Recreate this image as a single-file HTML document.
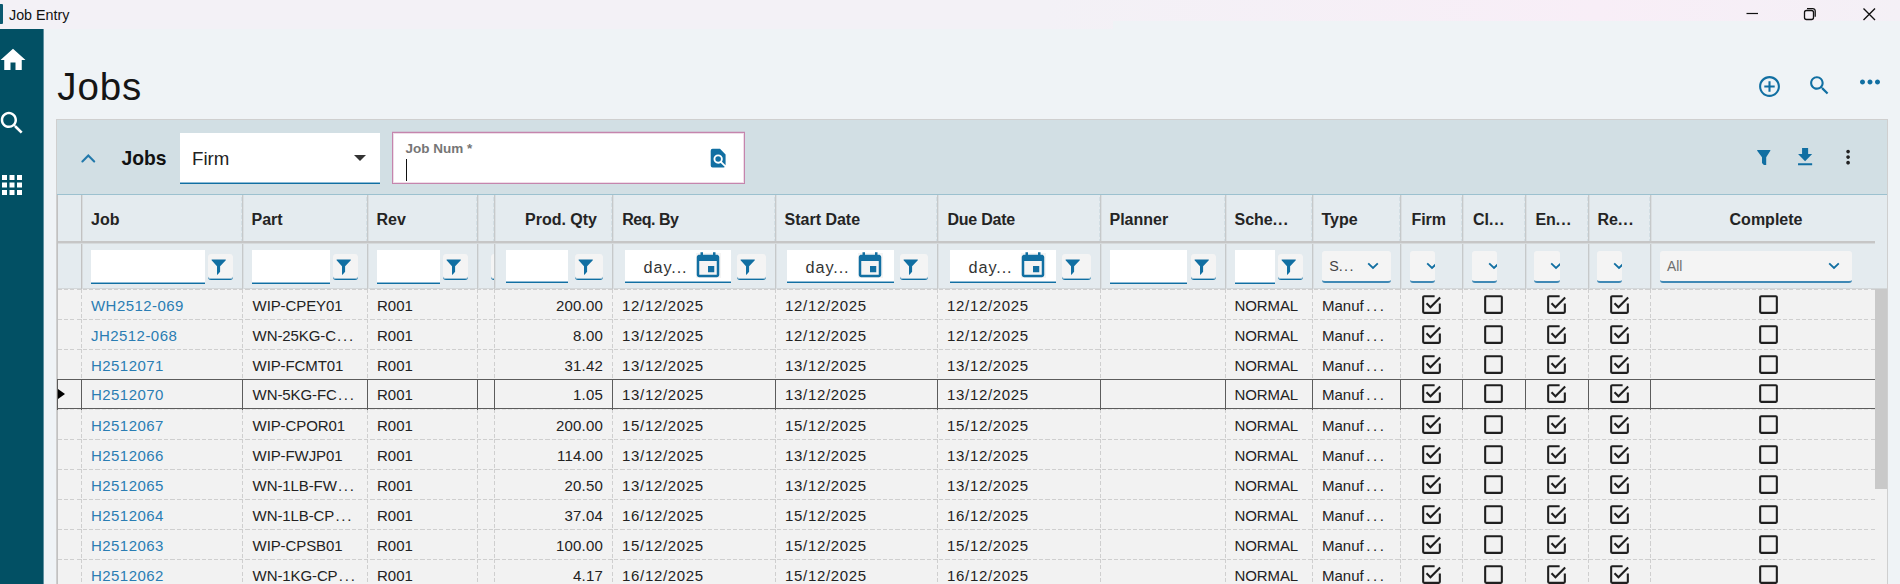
<!DOCTYPE html>
<html lang="en"><head><meta charset="utf-8"><title>Job Entry</title>
<style>
*{box-sizing:border-box;margin:0;padding:0}
html,body{width:1900px;height:584px;overflow:hidden}
body{position:relative;background:#eff3f6;font-family:"Liberation Sans",sans-serif;color:#222;font-size:15px}
.abs{position:absolute}
.tbar{position:absolute;left:0;top:0;width:1900px;height:29px;background:linear-gradient(to right,#f3f1f6 0%,#f3f1f6 55%,#f8eef7 84%,#f4f0f6 100%)}
.tbar2{position:absolute;left:1113px;top:21px;width:787px;height:8px;background:#eff3f6}
.appico{position:absolute;left:0;top:4px;width:2.500px;height:20px;background:#0b5a70;border-radius:0 1px 1px 0}
.ttl{position:absolute;left:9px;top:6.800px;font-size:14.3px;line-height:17px;color:#111;white-space:nowrap}
.side{position:absolute;left:0;top:29px;width:43px;height:555px;background:#025064;box-shadow:1px 0 0 #5f90a0}
.side svg{position:absolute}
h1{position:absolute;left:57.300px;top:64.800px;letter-spacing:.9px;font-size:38.5px;line-height:44px;font-weight:400;color:#151515;white-space:nowrap}
.panel{position:absolute;left:56px;top:119px;width:1832px;height:480px;background:#d2dfe4;border:1px solid #cfcfcf}
.ptitle{position:absolute;left:121.5px;top:147px;font-size:19.3px;line-height:24px;font-weight:700;color:#111}
.firm{position:absolute;left:180px;top:133px;width:200px;height:51px;background:linear-gradient(to bottom,#fff 0,#fff 49px,#8dbbd6 49px,#8dbbd6 50px,#116fa2 50px)}
.firm span{position:absolute;left:12px;top:14px;font-size:18.7px;line-height:24px;color:#222}
.firm i{position:absolute;left:174px;top:22px;width:0;height:0;border-left:6.5px solid transparent;border-right:6.500px solid transparent;border-top:6px solid #333}
.jobnum{position:absolute;left:392px;top:132px;width:353px;height:52px;background:#fff;border:1px solid #c585ad;box-shadow:inset 0 0 0 1px rgba(197,133,173,.28),0 -1px 0 rgba(197,133,173,.25)}
.jobnum label{position:absolute;left:12.5px;top:8px;font-size:13.5px;line-height:16px;font-weight:700;color:#767676;white-space:nowrap}
.jobnum i{position:absolute;left:13px;top:26px;width:1px;height:22px;background:#111}
.jobnum svg{position:absolute;left:314.200px;top:14px}
/* grid */
.grid{position:absolute;left:0;top:0;width:1900px;height:584px}
.gtop{position:absolute;left:57px;top:194px;width:1830px;height:1px;background:#9cc1cf}
.ghead{position:absolute;left:57px;top:195px;width:1830px;height:94px;background:#e4ebef;box-shadow:inset 0 -1px 0 #d3d7d9}
.gleft{position:absolute;left:57px;top:195px;width:1px;height:400px;background:#c1c1c1}
.hc{position:absolute;top:196px;height:45px;line-height:47px;font-weight:700;font-size:16px;color:#242424;padding-left:9.5px;white-space:nowrap;overflow:hidden}
.hc.r{text-align:right;padding-right:15px;padding-left:0}
.hc.c{text-align:center;padding-left:0}
.hline{z-index:2;position:absolute;left:58px;top:241px;width:1817px;height:3px;background:linear-gradient(to bottom,#c6c6c6 0,#c6c6c6 2px,#d6dadc 2px)}
.hv{position:absolute;top:195px;width:1px;height:94px;background:#c6c9ca}
.hv::after{content:"";position:absolute;left:1px;top:0;width:1px;height:94px;background:#dadfe2}
.hv::before{content:"";position:absolute;left:-1px;top:2px;width:1px;height:44px;background:repeating-linear-gradient(to bottom,#d3dfe5 0 4px,transparent 4px 6px)}
.hv.solid{background:#c2c2c2;width:1px}.hv.solid::before{display:none}.hv.solid::after{content:"";position:absolute;left:1px;top:0;width:1px;height:94px;background:#d8dcde}
.fin{position:absolute;top:250px;height:34px;background:linear-gradient(to bottom,#fff 0,#fff calc(100% - 2px),#8dbbd6 calc(100% - 2px),#8dbbd6 calc(100% - 1px),#116fa2 calc(100% - 1px))}
.fin.s{height:33px}
.fbtn{position:absolute;top:254px;height:26px;background:#f4f4f4;border-bottom:1px solid #116fa2;box-shadow:inset 0 -1px 0 rgba(17,111,162,.4);border-radius:3px}
.fbtn svg{position:absolute;left:2.500px;top:4.500px}
.fstub{position:absolute;top:254px;width:3px;height:26px;border-bottom:1px solid #116fa2;box-shadow:inset 0 -1px 0 rgba(17,111,162,.4);background:#f4f4f4;border-radius:3px 0 0 3px}
.fdate .day{position:absolute;left:18.500px;top:6.500px;font-size:16.3px;line-height:20px;color:#333;letter-spacing:.9px}
.fdate svg{position:absolute;left:68.300px;top:1.450px}
.fdate b{position:absolute;left:70.500px;top:3px;width:25px;height:25px;background:#f4f4f4}
.fdd{position:absolute;top:251px;height:32px;background:#f4f4f4;border-bottom:2px solid #4089b5;border-radius:3px;overflow:hidden}
.fdd .chv{position:absolute;left:16px;top:10.800px}
.fdd.w .chv{left:auto;right:12.300px}
.fdd .ddl{position:absolute;left:7px;top:7px;font-size:13.8px;line-height:17px;color:#6d6d6d}
.fdd .ddl.dk{color:#444;font-size:14.3px;left:7.300px}
.fdd .ddl .dots{letter-spacing:1.300px}
.row{position:absolute;left:58px;width:1829px;height:30px;background:#f2f2f2;border-top:1px solid transparent}
.row::before{content:"";position:absolute;left:0;top:-1px;width:100%;height:1px;background:repeating-linear-gradient(to right,#cfcfcf 0,#cfcfcf 4px,transparent 4px,transparent 6.250px)}
.row.sel::before{display:none}
.row .c{position:absolute;top:-1px;height:31px;border-left:1px solid transparent;background:repeating-linear-gradient(to bottom,#cfcfcf 0,#cfcfcf 4px,transparent 4px,transparent 6.250px) left top/1px 100% no-repeat border-box;line-height:34px;font-size:15px;padding-left:9px;white-space:nowrap;overflow:hidden}
.row .c.k-sel{border-left:none;background:none}
.row .c.k-qty{text-align:right;padding-right:9px;padding-left:0}
.row .c.k-job{color:#2a7db3}
.row .c svg{position:absolute;top:2.800px;left:50%;margin-left:-12.600px}
.row.sel{border-top:1px solid #5c5c5c;border-bottom:1px solid #5c5c5c;height:30px;z-index:2}
.row.sel .c{border-left:1px solid #5c5c5c;background:none}
.row.sel .c.k-sel{border-left:1px solid #5c5c5c;margin-left:-1px;padding-left:0}
.arrow{position:absolute;left:0;top:9.800px;width:0;height:0;border-top:5.800px solid transparent;border-bottom:5.800px solid transparent;border-left:7px solid #000}
.sbar{z-index:3;position:absolute;left:1875px;top:289px;width:12px;height:200px;background:#c9c9c9}
.strack{z-index:3;position:absolute;left:1875px;top:289px;width:12px;height:300px;background:#f2f2f2}

.row .c.k-job{padding-left:9px;letter-spacing:.45px}
.row .c.k-part{letter-spacing:-.1px;padding-left:9.600px}
.row .c.k-req,.row .c.k-start,.row .c.k-due{letter-spacing:.68px}
.row .c.k-qty{letter-spacing:.2px}
.row .c.k-type{letter-spacing:0}
.dots{letter-spacing:1.600px}
.k-part .dots{letter-spacing:1.800px;margin-left:1.200px}
.k-type .dots{letter-spacing:2.600px;margin-left:2.600px}
.row .c.k-sched{letter-spacing:-.1px;padding-left:8.500px}
.hc.h-job{padding-left:10px}
.hc.h-req{letter-spacing:-.5px;padding-left:10.300px}
.hc.h-due{letter-spacing:-.25px;padding-left:10.500px}
.hc.h-firm{padding-left:11.400px}.hc.h-cl{padding-left:10.900px}.hc.h-en{padding-left:10.400px}.hc.h-re{padding-left:9.500px}
.hc .dots{letter-spacing:.9px}

.row.sel .c{line-height:32px}
.row.sel .c svg{top:1.600px}
.row.aft::before{opacity:.45}

</style></head>
<body>
<div class="tbar"></div><div class="tbar2"></div>
<div class="appico"></div>
<div class="ttl">Job Entry</div>
<svg class="abs" style="left:1740px;top:0" width="150" height="29" viewBox="0 0 150 29">
 <path d="M6.500 13.500h11.500" stroke="#111" stroke-width="1.200" fill="none"/>
 <rect x="64.500" y="10.500" width="9" height="9" rx="2" fill="none" stroke="#111" stroke-width="1.300"/>
 <path d="M67 8.600h5.800a2.400 2.400 0 0 1 2.400 2.400v5.800" fill="none" stroke="#111" stroke-width="1.300"/>
 <path d="M123.500 8.500l11.500 11.500M135 8.500l-11.500 11.500" stroke="#111" stroke-width="1.400" fill="none"/>
</svg>
<div class="side">
 <svg style="left:-2.400px;top:16.200px" width="30" height="30" viewBox="0 0 24 24"><path fill="#fff" d="M10 20v-6h4v6h5v-8h3L12 3 2 12h3v8z"/></svg>
 <svg style="left:-2.700px;top:78.500px" width="30" height="30" viewBox="0 0 24 24"><path fill="#fff" d="M15.500 14h-.79l-.28-.27C15.410 12.590 16 11.110 16 9.500 16 5.910 13.090 3 9.500 3S3 5.910 3 9.500 5.910 16 9.500 16c1.610 0 3.090-.59 4.230-1.570l.27.28v.79l5 4.990L20.490 19l-4.990-5zm-6 0C7.010 14 5 11.990 5 9.500S7.010 5 9.500 5 14 7.010 14 9.500 11.990 14 9.500 14z"/></svg>
 <svg style="left:-3px;top:141px" width="30" height="30" viewBox="0 0 24 24"><path fill="#fff" d="M4 8h4V4H4v4zm6 12h4v-4h-4v4zm-6 0h4v-4H4v4zm0-6h4v-4H4v4zm6 0h4v-4h-4v4zm6-10v4h4V4h-4zm-6 4h4V4h-4v4zm6 6h4v-4h-4v4zm0 6h4v-4h-4v4z"/></svg>
</div>
<h1>Jobs</h1>
<svg class="abs" style="left:1757px;top:73.700px" width="25" height="25" viewBox="0 0 24 24"><path fill="#116fa2" d="M13 7h-2v4H7v2h4v4h2v-4h4v-2h-4V7zm-1-5C6.480 2 2 6.480 2 12s4.480 10 10 10 10-4.480 10-10S17.520 2 12 2zm0 18c-4.410 0-8-3.590-8-8s3.590-8 8-8 8 3.590 8 8-3.590 8-8 8z"/></svg>
<svg class="abs" style="left:1807px;top:72.900px" width="25" height="25" viewBox="0 0 24 24"><path fill="#116fa2" d="M15.500 14h-.79l-.28-.27C15.410 12.590 16 11.110 16 9.500 16 5.910 13.090 3 9.500 3S3 5.910 3 9.500 5.910 16 9.500 16c1.610 0 3.090-.59 4.230-1.570l.27.28v.79l5 4.990L20.490 19l-4.990-5zm-6 0C7.010 14 5 11.990 5 9.500S7.010 5 9.500 5 14 7.010 14 9.500 11.990 14 9.500 14z"/></svg>
<svg class="abs" style="left:1854.700px;top:67.400px" width="30" height="30" viewBox="0 0 24 24"><path fill="#116fa2" d="M6 10c-1.100 0-2 .9-2 2s.9 2 2 2 2-.9 2-2-.9-2-2-2zm12 0c-1.100 0-2 .9-2 2s.9 2 2 2 2-.9 2-2-.9-2-2-2zm-6 0c-1.100 0-2 .9-2 2s.9 2 2 2 2-.9 2-2-.9-2-2-2z"/></svg>
<div class="panel"></div>
<svg class="abs" style="left:79px;top:151px" width="18" height="14" viewBox="0 0 18 14"><path d="M3.400 10.400l5.900-5.900l5.900 5.900" fill="none" stroke="#2379ab" stroke-width="2.100" stroke-linecap="round"/></svg>
<div class="ptitle">Jobs</div>
<div class="firm"><span>Firm</span><i></i></div>
<div class="jobnum"><label>Job Num *</label><i></i>
 <svg width="22.300" height="22.300" viewBox="0 0 24 24"><path fill="#116fa2" d="M9,13A3,3 0 0,0 12,16A3,3 0 0,0 15,13A3,3 0 0,0 12,10A3,3 0 0,0 9,13M20,19.590V8L14,2H6A2,2 0 0,0 4,4V20A2,2 0 0,0 6,22H18C18.450,22 18.850,21.850 19.190,21.600L14.760,17.170C13.960,17.690 13,18 12,18A5,5 0 0,1 7,13A5,5 0 0,1 12,8A5,5 0 0,1 17,13C17,14 16.690,14.960 16.170,15.750L20,19.590Z"/></svg>
</div>
<svg class="abs" style="left:1757px;top:150px" width="14" height="16" viewBox="0 0 14 16"><path fill="#116fa2" d="M0.500 0h12.500a.4.400 0 0 1 .32.650l-4.120 6.650v7.700h-2.300l-1.900-1.900v-5.800l-4.820-6.650a.4.400 0 0 1 .32-.65z"/></svg>
<svg class="abs" style="left:1792.800px;top:145.100px" width="24.200" height="24.200" viewBox="0 0 24 24"><path fill="#116fa2" d="M19 9h-4V3H9v6H5l7 7 7-7zM5 18v2h14v-2H5z"/></svg>
<svg class="abs" style="left:1837.400px;top:145.700px" width="22.200" height="22.200" viewBox="0 0 24 24"><path fill="#222" d="M12 8c1.100 0 2-.9 2-2s-.9-2-2-2-2 .9-2 2 .9 2 2 2zm0 2c-1.100 0-2 .9-2 2s.9 2 2 2 2-.9 2-2-.9-2-2-2zm0 6c-1.100 0-2 .9-2 2s.9 2 2 2 2-.9 2-2-.9-2-2-2z"/></svg>
<div class="gtop"></div><div class="ghead"></div><div class="strack"></div><div class="gleft"></div>
<div class="grid">
<div class="hc h-sel first" style="left:58px;width:23px"><span></span></div>
<div class="hc h-job" style="left:81px;width:161px"><span>Job</span></div>
<div class="hc h-part" style="left:242px;width:125px"><span>Part</span></div>
<div class="hc h-rev" style="left:367px;width:110px"><span>Rev</span></div>
<div class="hc h-gap" style="left:477px;width:17px"><span></span></div>
<div class="hc h-qty r" style="left:494px;width:118px"><span>Prod. Qty</span></div>
<div class="hc h-req" style="left:612px;width:163px"><span>Req. By</span></div>
<div class="hc h-start" style="left:775px;width:162px"><span>Start Date</span></div>
<div class="hc h-due" style="left:937px;width:163px"><span>Due Date</span></div>
<div class="hc h-planner" style="left:1100px;width:125px"><span>Planner</span></div>
<div class="hc h-sched" style="left:1225px;width:87px"><span>Sche<span class="dots">...</span></span></div>
<div class="hc h-type" style="left:1312px;width:88px"><span>Type</span></div>
<div class="hc h-firm" style="left:1400px;width:62px"><span>Firm</span></div>
<div class="hc h-cl" style="left:1462px;width:63px"><span>Cl<span class="dots">...</span></span></div>
<div class="hc h-en" style="left:1525px;width:63px"><span>En<span class="dots">...</span></span></div>
<div class="hc h-re" style="left:1588px;width:62px"><span>Re<span class="dots">...</span></span></div>
<div class="hc h-complete c" style="left:1650px;width:232px"><span>Complete</span></div>
<div class="hline"></div>
<div class="fin" style="left:91px;width:114px"></div><div class="fbtn" style="left:208px;width:25px"><svg class="fun" viewBox="0 0 16 17" width="16" height="17"><path d="M0.900 0.500h13.600a.4.400 0 0 1 .3.650l-5.700 6.200v5.300l-2.600 3.100a.3.300 0 0 1-.5-.2v-8.200l-5.400-6.200a.4.400 0 0 1 .3-.65z" fill="#116fa2"/></svg></div>
<div class="fin" style="left:252px;width:78px"></div><div class="fbtn" style="left:333px;width:25px"><svg class="fun" viewBox="0 0 16 17" width="16" height="17"><path d="M0.900 0.500h13.600a.4.400 0 0 1 .3.650l-5.700 6.200v5.300l-2.600 3.100a.3.300 0 0 1-.5-.2v-8.200l-5.400-6.200a.4.400 0 0 1 .3-.65z" fill="#116fa2"/></svg></div>
<div class="fin" style="left:377px;width:63px"></div><div class="fbtn" style="left:443px;width:25px"><svg class="fun" viewBox="0 0 16 17" width="16" height="17"><path d="M0.900 0.500h13.600a.4.400 0 0 1 .3.650l-5.700 6.200v5.300l-2.600 3.100a.3.300 0 0 1-.5-.2v-8.200l-5.400-6.200a.4.400 0 0 1 .3-.65z" fill="#116fa2"/></svg></div>
<div class="fstub" style="left:491px"></div>
<div class="fin s" style="left:506px;width:62px"></div><div class="fbtn" style="left:575px;width:28px"><svg class="fun" viewBox="0 0 16 17" width="16" height="17"><path d="M0.900 0.500h13.600a.4.400 0 0 1 .3.650l-5.700 6.200v5.300l-2.600 3.100a.3.300 0 0 1-.5-.2v-8.200l-5.400-6.200a.4.400 0 0 1 .3-.65z" fill="#116fa2"/></svg></div>
<div class="fin s fdate" style="left:625px;width:106px"><span class="day">day...</span><b></b><svg class="cal" viewBox="0 0 24 24" width="30" height="30"><path fill="#116fa2" d="M17 12h-5v5h5v-5zM16 1v2H8V1H6v2H5c-1.110 0-1.990.9-1.990 2L3 19c0 1.100.89 2 2 2h14c1.100 0 2-.9 2-2V5c0-1.100-.9-2-2-2h-1V1h-2zm3 18H5V8h14v11z"/></svg></div><div class="fbtn" style="left:737px;width:29px"><svg class="fun" viewBox="0 0 16 17" width="16" height="17"><path d="M0.900 0.500h13.600a.4.400 0 0 1 .3.650l-5.700 6.200v5.300l-2.600 3.100a.3.300 0 0 1-.5-.2v-8.200l-5.400-6.200a.4.400 0 0 1 .3-.65z" fill="#116fa2"/></svg></div>
<div class="fin s fdate" style="left:787px;width:107px"><span class="day">day...</span><b></b><svg class="cal" viewBox="0 0 24 24" width="30" height="30"><path fill="#116fa2" d="M17 12h-5v5h5v-5zM16 1v2H8V1H6v2H5c-1.110 0-1.990.9-1.990 2L3 19c0 1.100.89 2 2 2h14c1.100 0 2-.9 2-2V5c0-1.100-.9-2-2-2h-1V1h-2zm3 18H5V8h14v11z"/></svg></div><div class="fbtn" style="left:900px;width:28px"><svg class="fun" viewBox="0 0 16 17" width="16" height="17"><path d="M0.900 0.500h13.600a.4.400 0 0 1 .3.650l-5.700 6.200v5.300l-2.600 3.100a.3.300 0 0 1-.5-.2v-8.200l-5.400-6.200a.4.400 0 0 1 .3-.65z" fill="#116fa2"/></svg></div>
<div class="fin s fdate" style="left:950px;width:106px"><span class="day">day...</span><b></b><svg class="cal" viewBox="0 0 24 24" width="30" height="30"><path fill="#116fa2" d="M17 12h-5v5h5v-5zM16 1v2H8V1H6v2H5c-1.110 0-1.990.9-1.990 2L3 19c0 1.100.89 2 2 2h14c1.100 0 2-.9 2-2V5c0-1.100-.9-2-2-2h-1V1h-2zm3 18H5V8h14v11z"/></svg></div><div class="fbtn" style="left:1062px;width:29px"><svg class="fun" viewBox="0 0 16 17" width="16" height="17"><path d="M0.900 0.500h13.600a.4.400 0 0 1 .3.650l-5.700 6.200v5.300l-2.600 3.100a.3.300 0 0 1-.5-.2v-8.200l-5.400-6.200a.4.400 0 0 1 .3-.65z" fill="#116fa2"/></svg></div>
<div class="fin" style="left:1110px;width:77px"></div><div class="fbtn" style="left:1191px;width:25px"><svg class="fun" viewBox="0 0 16 17" width="16" height="17"><path d="M0.900 0.500h13.600a.4.400 0 0 1 .3.650l-5.700 6.200v5.300l-2.600 3.100a.3.300 0 0 1-.5-.2v-8.200l-5.400-6.200a.4.400 0 0 1 .3-.65z" fill="#116fa2"/></svg></div>
<div class="fin" style="left:1235px;width:40px"></div><div class="fbtn" style="left:1278px;width:25px"><svg class="fun" viewBox="0 0 16 17" width="16" height="17"><path d="M0.900 0.500h13.600a.4.400 0 0 1 .3.650l-5.700 6.200v5.300l-2.600 3.100a.3.300 0 0 1-.5-.2v-8.200l-5.400-6.200a.4.400 0 0 1 .3-.65z" fill="#116fa2"/></svg></div>
<div class="fdd w" style="left:1322px;width:69px"><span class="ddl dk">S<span class="dots">...</span></span><svg class="chv" viewBox="0 0 12 8" width="12" height="8"><path d="M1.2 1.4l4.8 4.6l4.8 -4.6" fill="none" stroke="#116fa2" stroke-width="1.850"/></svg></div>
<div class="fdd" style="left:1410px;width:25px"><svg class="chv" viewBox="0 0 12 8" width="12" height="8"><path d="M1.2 1.4l4.8 4.6l4.8 -4.6" fill="none" stroke="#116fa2" stroke-width="1.850"/></svg></div>
<div class="fdd" style="left:1472px;width:25px"><svg class="chv" viewBox="0 0 12 8" width="12" height="8"><path d="M1.2 1.4l4.8 4.6l4.8 -4.6" fill="none" stroke="#116fa2" stroke-width="1.850"/></svg></div>
<div class="fdd" style="left:1534px;width:26px"><svg class="chv" viewBox="0 0 12 8" width="12" height="8"><path d="M1.2 1.4l4.8 4.6l4.8 -4.6" fill="none" stroke="#116fa2" stroke-width="1.850"/></svg></div>
<div class="fdd" style="left:1597px;width:25px"><svg class="chv" viewBox="0 0 12 8" width="12" height="8"><path d="M1.2 1.4l4.8 4.6l4.8 -4.6" fill="none" stroke="#116fa2" stroke-width="1.850"/></svg></div>
<div class="fdd w" style="left:1660px;width:192px"><span class="ddl">All</span><svg class="chv" viewBox="0 0 12 8" width="12" height="8"><path d="M1.2 1.4l4.8 4.6l4.8 -4.6" fill="none" stroke="#116fa2" stroke-width="1.850"/></svg></div>
<div class="hv solid" style="left:81px"></div>
<div class="hv" style="left:242px"></div>
<div class="hv" style="left:367px"></div>
<div class="hv" style="left:477px"></div>
<div class="hv" style="left:494px"></div>
<div class="hv" style="left:612px"></div>
<div class="hv" style="left:775px"></div>
<div class="hv" style="left:937px"></div>
<div class="hv" style="left:1100px"></div>
<div class="hv" style="left:1225px"></div>
<div class="hv" style="left:1312px"></div>
<div class="hv" style="left:1400px"></div>
<div class="hv" style="left:1462px"></div>
<div class="hv" style="left:1525px"></div>
<div class="hv" style="left:1588px"></div>
<div class="hv" style="left:1650px"></div>
<div class="row" style="top:289px">
<div class="c k-sel" style="left:0px;width:23px"></div>
<div class="c k-job" style="left:23px;width:161px"><span>WH2512-069</span></div>
<div class="c k-part" style="left:184px;width:125px"><span>WIP-CPEY01</span></div>
<div class="c k-rev" style="left:309px;width:110px"><span>R001</span></div>
<div class="c k-gap" style="left:419px;width:17px"></div>
<div class="c k-qty" style="left:436px;width:118px"><span>200.00</span></div>
<div class="c k-req" style="left:554px;width:163px"><span>12/12/2025</span></div>
<div class="c k-start" style="left:717px;width:162px"><span>12/12/2025</span></div>
<div class="c k-due" style="left:879px;width:163px"><span>12/12/2025</span></div>
<div class="c k-planner" style="left:1042px;width:125px"></div>
<div class="c k-sched" style="left:1167px;width:87px"><span>NORMAL</span></div>
<div class="c k-type" style="left:1254px;width:88px"><span>Manuf<span class="dots">...</span></span></div>
<div class="c k-firm" style="left:1342px;width:62px"><svg class="cb" viewBox="0 0 24 24" width="25" height="25"><path fill="#1f1f1f" d="M19,19H5V5H15V3H5C3.890,3 3,3.890 3,5V19A2,2 0 0,0 5,21H19A2,2 0 0,0 21,19V11H19M7.910,10.080L6.500,11.500L11,16L21,6L19.590,4.580L11,13.170L7.910,10.080Z"/></svg></div>
<div class="c k-cl" style="left:1404px;width:63px"><svg class="cb" viewBox="0 0 24 24" width="25" height="25"><path fill="#1f1f1f" d="M19,3H5C3.890,3 3,3.890 3,5V19A2,2 0 0,0 5,21H19A2,2 0 0,0 21,19V5C21,3.890 20.100,3 19,3M19,5V19H5V5H19Z"/></svg></div>
<div class="c k-en" style="left:1467px;width:63px"><svg class="cb" viewBox="0 0 24 24" width="25" height="25"><path fill="#1f1f1f" d="M19,19H5V5H15V3H5C3.890,3 3,3.890 3,5V19A2,2 0 0,0 5,21H19A2,2 0 0,0 21,19V11H19M7.910,10.080L6.500,11.500L11,16L21,6L19.590,4.580L11,13.170L7.910,10.080Z"/></svg></div>
<div class="c k-re" style="left:1530px;width:62px"><svg class="cb" viewBox="0 0 24 24" width="25" height="25"><path fill="#1f1f1f" d="M19,19H5V5H15V3H5C3.890,3 3,3.890 3,5V19A2,2 0 0,0 5,21H19A2,2 0 0,0 21,19V11H19M7.910,10.080L6.500,11.500L11,16L21,6L19.590,4.580L11,13.170L7.910,10.080Z"/></svg></div>
<div class="c k-complete" style="left:1592px;width:237px"><svg class="cb" viewBox="0 0 24 24" width="25" height="25"><path fill="#1f1f1f" d="M19,3H5C3.890,3 3,3.890 3,5V19A2,2 0 0,0 5,21H19A2,2 0 0,0 21,19V5C21,3.890 20.100,3 19,3M19,5V19H5V5H19Z"/></svg></div>
</div>
<div class="row" style="top:319px">
<div class="c k-sel" style="left:0px;width:23px"></div>
<div class="c k-job" style="left:23px;width:161px"><span>JH2512-068</span></div>
<div class="c k-part" style="left:184px;width:125px"><span>WN-25KG-C<span class="dots">...</span></span></div>
<div class="c k-rev" style="left:309px;width:110px"><span>R001</span></div>
<div class="c k-gap" style="left:419px;width:17px"></div>
<div class="c k-qty" style="left:436px;width:118px"><span>8.00</span></div>
<div class="c k-req" style="left:554px;width:163px"><span>13/12/2025</span></div>
<div class="c k-start" style="left:717px;width:162px"><span>12/12/2025</span></div>
<div class="c k-due" style="left:879px;width:163px"><span>12/12/2025</span></div>
<div class="c k-planner" style="left:1042px;width:125px"></div>
<div class="c k-sched" style="left:1167px;width:87px"><span>NORMAL</span></div>
<div class="c k-type" style="left:1254px;width:88px"><span>Manuf<span class="dots">...</span></span></div>
<div class="c k-firm" style="left:1342px;width:62px"><svg class="cb" viewBox="0 0 24 24" width="25" height="25"><path fill="#1f1f1f" d="M19,19H5V5H15V3H5C3.890,3 3,3.890 3,5V19A2,2 0 0,0 5,21H19A2,2 0 0,0 21,19V11H19M7.910,10.080L6.500,11.500L11,16L21,6L19.590,4.580L11,13.170L7.910,10.080Z"/></svg></div>
<div class="c k-cl" style="left:1404px;width:63px"><svg class="cb" viewBox="0 0 24 24" width="25" height="25"><path fill="#1f1f1f" d="M19,3H5C3.890,3 3,3.890 3,5V19A2,2 0 0,0 5,21H19A2,2 0 0,0 21,19V5C21,3.890 20.100,3 19,3M19,5V19H5V5H19Z"/></svg></div>
<div class="c k-en" style="left:1467px;width:63px"><svg class="cb" viewBox="0 0 24 24" width="25" height="25"><path fill="#1f1f1f" d="M19,19H5V5H15V3H5C3.890,3 3,3.890 3,5V19A2,2 0 0,0 5,21H19A2,2 0 0,0 21,19V11H19M7.910,10.080L6.500,11.500L11,16L21,6L19.590,4.580L11,13.170L7.910,10.080Z"/></svg></div>
<div class="c k-re" style="left:1530px;width:62px"><svg class="cb" viewBox="0 0 24 24" width="25" height="25"><path fill="#1f1f1f" d="M19,19H5V5H15V3H5C3.890,3 3,3.890 3,5V19A2,2 0 0,0 5,21H19A2,2 0 0,0 21,19V11H19M7.910,10.080L6.500,11.500L11,16L21,6L19.590,4.580L11,13.170L7.910,10.080Z"/></svg></div>
<div class="c k-complete" style="left:1592px;width:237px"><svg class="cb" viewBox="0 0 24 24" width="25" height="25"><path fill="#1f1f1f" d="M19,3H5C3.890,3 3,3.890 3,5V19A2,2 0 0,0 5,21H19A2,2 0 0,0 21,19V5C21,3.890 20.100,3 19,3M19,5V19H5V5H19Z"/></svg></div>
</div>
<div class="row" style="top:349px">
<div class="c k-sel" style="left:0px;width:23px"></div>
<div class="c k-job" style="left:23px;width:161px"><span>H2512071</span></div>
<div class="c k-part" style="left:184px;width:125px"><span>WIP-FCMT01</span></div>
<div class="c k-rev" style="left:309px;width:110px"><span>R001</span></div>
<div class="c k-gap" style="left:419px;width:17px"></div>
<div class="c k-qty" style="left:436px;width:118px"><span>31.42</span></div>
<div class="c k-req" style="left:554px;width:163px"><span>13/12/2025</span></div>
<div class="c k-start" style="left:717px;width:162px"><span>13/12/2025</span></div>
<div class="c k-due" style="left:879px;width:163px"><span>13/12/2025</span></div>
<div class="c k-planner" style="left:1042px;width:125px"></div>
<div class="c k-sched" style="left:1167px;width:87px"><span>NORMAL</span></div>
<div class="c k-type" style="left:1254px;width:88px"><span>Manuf<span class="dots">...</span></span></div>
<div class="c k-firm" style="left:1342px;width:62px"><svg class="cb" viewBox="0 0 24 24" width="25" height="25"><path fill="#1f1f1f" d="M19,19H5V5H15V3H5C3.890,3 3,3.890 3,5V19A2,2 0 0,0 5,21H19A2,2 0 0,0 21,19V11H19M7.910,10.080L6.500,11.500L11,16L21,6L19.590,4.580L11,13.170L7.910,10.080Z"/></svg></div>
<div class="c k-cl" style="left:1404px;width:63px"><svg class="cb" viewBox="0 0 24 24" width="25" height="25"><path fill="#1f1f1f" d="M19,3H5C3.890,3 3,3.890 3,5V19A2,2 0 0,0 5,21H19A2,2 0 0,0 21,19V5C21,3.890 20.100,3 19,3M19,5V19H5V5H19Z"/></svg></div>
<div class="c k-en" style="left:1467px;width:63px"><svg class="cb" viewBox="0 0 24 24" width="25" height="25"><path fill="#1f1f1f" d="M19,19H5V5H15V3H5C3.890,3 3,3.890 3,5V19A2,2 0 0,0 5,21H19A2,2 0 0,0 21,19V11H19M7.910,10.080L6.500,11.500L11,16L21,6L19.590,4.580L11,13.170L7.910,10.080Z"/></svg></div>
<div class="c k-re" style="left:1530px;width:62px"><svg class="cb" viewBox="0 0 24 24" width="25" height="25"><path fill="#1f1f1f" d="M19,19H5V5H15V3H5C3.890,3 3,3.890 3,5V19A2,2 0 0,0 5,21H19A2,2 0 0,0 21,19V11H19M7.910,10.080L6.500,11.500L11,16L21,6L19.590,4.580L11,13.170L7.910,10.080Z"/></svg></div>
<div class="c k-complete" style="left:1592px;width:237px"><svg class="cb" viewBox="0 0 24 24" width="25" height="25"><path fill="#1f1f1f" d="M19,3H5C3.890,3 3,3.890 3,5V19A2,2 0 0,0 5,21H19A2,2 0 0,0 21,19V5C21,3.890 20.100,3 19,3M19,5V19H5V5H19Z"/></svg></div>
</div>
<div class="row sel" style="top:379px">
<div class="c k-sel" style="left:0px;width:23px"><i class="arrow"></i></div>
<div class="c k-job" style="left:23px;width:161px"><span>H2512070</span></div>
<div class="c k-part" style="left:184px;width:125px"><span>WN-5KG-FC<span class="dots">...</span></span></div>
<div class="c k-rev" style="left:309px;width:110px"><span>R001</span></div>
<div class="c k-gap" style="left:419px;width:17px"></div>
<div class="c k-qty" style="left:436px;width:118px"><span>1.05</span></div>
<div class="c k-req" style="left:554px;width:163px"><span>13/12/2025</span></div>
<div class="c k-start" style="left:717px;width:162px"><span>13/12/2025</span></div>
<div class="c k-due" style="left:879px;width:163px"><span>13/12/2025</span></div>
<div class="c k-planner" style="left:1042px;width:125px"></div>
<div class="c k-sched" style="left:1167px;width:87px"><span>NORMAL</span></div>
<div class="c k-type" style="left:1254px;width:88px"><span>Manuf<span class="dots">...</span></span></div>
<div class="c k-firm" style="left:1342px;width:62px"><svg class="cb" viewBox="0 0 24 24" width="25" height="25"><path fill="#1f1f1f" d="M19,19H5V5H15V3H5C3.890,3 3,3.890 3,5V19A2,2 0 0,0 5,21H19A2,2 0 0,0 21,19V11H19M7.910,10.080L6.500,11.500L11,16L21,6L19.590,4.580L11,13.170L7.910,10.080Z"/></svg></div>
<div class="c k-cl" style="left:1404px;width:63px"><svg class="cb" viewBox="0 0 24 24" width="25" height="25"><path fill="#1f1f1f" d="M19,3H5C3.890,3 3,3.890 3,5V19A2,2 0 0,0 5,21H19A2,2 0 0,0 21,19V5C21,3.890 20.100,3 19,3M19,5V19H5V5H19Z"/></svg></div>
<div class="c k-en" style="left:1467px;width:63px"><svg class="cb" viewBox="0 0 24 24" width="25" height="25"><path fill="#1f1f1f" d="M19,19H5V5H15V3H5C3.890,3 3,3.890 3,5V19A2,2 0 0,0 5,21H19A2,2 0 0,0 21,19V11H19M7.910,10.080L6.500,11.500L11,16L21,6L19.590,4.580L11,13.170L7.910,10.080Z"/></svg></div>
<div class="c k-re" style="left:1530px;width:62px"><svg class="cb" viewBox="0 0 24 24" width="25" height="25"><path fill="#1f1f1f" d="M19,19H5V5H15V3H5C3.890,3 3,3.890 3,5V19A2,2 0 0,0 5,21H19A2,2 0 0,0 21,19V11H19M7.910,10.080L6.500,11.500L11,16L21,6L19.590,4.580L11,13.170L7.910,10.080Z"/></svg></div>
<div class="c k-complete" style="left:1592px;width:237px"><svg class="cb" viewBox="0 0 24 24" width="25" height="25"><path fill="#1f1f1f" d="M19,3H5C3.890,3 3,3.890 3,5V19A2,2 0 0,0 5,21H19A2,2 0 0,0 21,19V5C21,3.890 20.100,3 19,3M19,5V19H5V5H19Z"/></svg></div>
</div>
<div class="row aft" style="top:409px">
<div class="c k-sel" style="left:0px;width:23px"></div>
<div class="c k-job" style="left:23px;width:161px"><span>H2512067</span></div>
<div class="c k-part" style="left:184px;width:125px"><span>WIP-CPOR01</span></div>
<div class="c k-rev" style="left:309px;width:110px"><span>R001</span></div>
<div class="c k-gap" style="left:419px;width:17px"></div>
<div class="c k-qty" style="left:436px;width:118px"><span>200.00</span></div>
<div class="c k-req" style="left:554px;width:163px"><span>15/12/2025</span></div>
<div class="c k-start" style="left:717px;width:162px"><span>15/12/2025</span></div>
<div class="c k-due" style="left:879px;width:163px"><span>15/12/2025</span></div>
<div class="c k-planner" style="left:1042px;width:125px"></div>
<div class="c k-sched" style="left:1167px;width:87px"><span>NORMAL</span></div>
<div class="c k-type" style="left:1254px;width:88px"><span>Manuf<span class="dots">...</span></span></div>
<div class="c k-firm" style="left:1342px;width:62px"><svg class="cb" viewBox="0 0 24 24" width="25" height="25"><path fill="#1f1f1f" d="M19,19H5V5H15V3H5C3.890,3 3,3.890 3,5V19A2,2 0 0,0 5,21H19A2,2 0 0,0 21,19V11H19M7.910,10.080L6.500,11.500L11,16L21,6L19.590,4.580L11,13.170L7.910,10.080Z"/></svg></div>
<div class="c k-cl" style="left:1404px;width:63px"><svg class="cb" viewBox="0 0 24 24" width="25" height="25"><path fill="#1f1f1f" d="M19,3H5C3.890,3 3,3.890 3,5V19A2,2 0 0,0 5,21H19A2,2 0 0,0 21,19V5C21,3.890 20.100,3 19,3M19,5V19H5V5H19Z"/></svg></div>
<div class="c k-en" style="left:1467px;width:63px"><svg class="cb" viewBox="0 0 24 24" width="25" height="25"><path fill="#1f1f1f" d="M19,19H5V5H15V3H5C3.890,3 3,3.890 3,5V19A2,2 0 0,0 5,21H19A2,2 0 0,0 21,19V11H19M7.910,10.080L6.500,11.500L11,16L21,6L19.590,4.580L11,13.170L7.910,10.080Z"/></svg></div>
<div class="c k-re" style="left:1530px;width:62px"><svg class="cb" viewBox="0 0 24 24" width="25" height="25"><path fill="#1f1f1f" d="M19,19H5V5H15V3H5C3.890,3 3,3.890 3,5V19A2,2 0 0,0 5,21H19A2,2 0 0,0 21,19V11H19M7.910,10.080L6.500,11.500L11,16L21,6L19.590,4.580L11,13.170L7.910,10.080Z"/></svg></div>
<div class="c k-complete" style="left:1592px;width:237px"><svg class="cb" viewBox="0 0 24 24" width="25" height="25"><path fill="#1f1f1f" d="M19,3H5C3.890,3 3,3.890 3,5V19A2,2 0 0,0 5,21H19A2,2 0 0,0 21,19V5C21,3.890 20.100,3 19,3M19,5V19H5V5H19Z"/></svg></div>
</div>
<div class="row" style="top:439px">
<div class="c k-sel" style="left:0px;width:23px"></div>
<div class="c k-job" style="left:23px;width:161px"><span>H2512066</span></div>
<div class="c k-part" style="left:184px;width:125px"><span>WIP-FWJP01</span></div>
<div class="c k-rev" style="left:309px;width:110px"><span>R001</span></div>
<div class="c k-gap" style="left:419px;width:17px"></div>
<div class="c k-qty" style="left:436px;width:118px"><span>114.00</span></div>
<div class="c k-req" style="left:554px;width:163px"><span>13/12/2025</span></div>
<div class="c k-start" style="left:717px;width:162px"><span>13/12/2025</span></div>
<div class="c k-due" style="left:879px;width:163px"><span>13/12/2025</span></div>
<div class="c k-planner" style="left:1042px;width:125px"></div>
<div class="c k-sched" style="left:1167px;width:87px"><span>NORMAL</span></div>
<div class="c k-type" style="left:1254px;width:88px"><span>Manuf<span class="dots">...</span></span></div>
<div class="c k-firm" style="left:1342px;width:62px"><svg class="cb" viewBox="0 0 24 24" width="25" height="25"><path fill="#1f1f1f" d="M19,19H5V5H15V3H5C3.890,3 3,3.890 3,5V19A2,2 0 0,0 5,21H19A2,2 0 0,0 21,19V11H19M7.910,10.080L6.500,11.500L11,16L21,6L19.590,4.580L11,13.170L7.910,10.080Z"/></svg></div>
<div class="c k-cl" style="left:1404px;width:63px"><svg class="cb" viewBox="0 0 24 24" width="25" height="25"><path fill="#1f1f1f" d="M19,3H5C3.890,3 3,3.890 3,5V19A2,2 0 0,0 5,21H19A2,2 0 0,0 21,19V5C21,3.890 20.100,3 19,3M19,5V19H5V5H19Z"/></svg></div>
<div class="c k-en" style="left:1467px;width:63px"><svg class="cb" viewBox="0 0 24 24" width="25" height="25"><path fill="#1f1f1f" d="M19,19H5V5H15V3H5C3.890,3 3,3.890 3,5V19A2,2 0 0,0 5,21H19A2,2 0 0,0 21,19V11H19M7.910,10.080L6.500,11.500L11,16L21,6L19.590,4.580L11,13.170L7.910,10.080Z"/></svg></div>
<div class="c k-re" style="left:1530px;width:62px"><svg class="cb" viewBox="0 0 24 24" width="25" height="25"><path fill="#1f1f1f" d="M19,19H5V5H15V3H5C3.890,3 3,3.890 3,5V19A2,2 0 0,0 5,21H19A2,2 0 0,0 21,19V11H19M7.910,10.080L6.500,11.500L11,16L21,6L19.590,4.580L11,13.170L7.910,10.080Z"/></svg></div>
<div class="c k-complete" style="left:1592px;width:237px"><svg class="cb" viewBox="0 0 24 24" width="25" height="25"><path fill="#1f1f1f" d="M19,3H5C3.890,3 3,3.890 3,5V19A2,2 0 0,0 5,21H19A2,2 0 0,0 21,19V5C21,3.890 20.100,3 19,3M19,5V19H5V5H19Z"/></svg></div>
</div>
<div class="row" style="top:469px">
<div class="c k-sel" style="left:0px;width:23px"></div>
<div class="c k-job" style="left:23px;width:161px"><span>H2512065</span></div>
<div class="c k-part" style="left:184px;width:125px"><span>WN-1LB-FW<span class="dots">...</span></span></div>
<div class="c k-rev" style="left:309px;width:110px"><span>R001</span></div>
<div class="c k-gap" style="left:419px;width:17px"></div>
<div class="c k-qty" style="left:436px;width:118px"><span>20.50</span></div>
<div class="c k-req" style="left:554px;width:163px"><span>13/12/2025</span></div>
<div class="c k-start" style="left:717px;width:162px"><span>13/12/2025</span></div>
<div class="c k-due" style="left:879px;width:163px"><span>13/12/2025</span></div>
<div class="c k-planner" style="left:1042px;width:125px"></div>
<div class="c k-sched" style="left:1167px;width:87px"><span>NORMAL</span></div>
<div class="c k-type" style="left:1254px;width:88px"><span>Manuf<span class="dots">...</span></span></div>
<div class="c k-firm" style="left:1342px;width:62px"><svg class="cb" viewBox="0 0 24 24" width="25" height="25"><path fill="#1f1f1f" d="M19,19H5V5H15V3H5C3.890,3 3,3.890 3,5V19A2,2 0 0,0 5,21H19A2,2 0 0,0 21,19V11H19M7.910,10.080L6.500,11.500L11,16L21,6L19.590,4.580L11,13.170L7.910,10.080Z"/></svg></div>
<div class="c k-cl" style="left:1404px;width:63px"><svg class="cb" viewBox="0 0 24 24" width="25" height="25"><path fill="#1f1f1f" d="M19,3H5C3.890,3 3,3.890 3,5V19A2,2 0 0,0 5,21H19A2,2 0 0,0 21,19V5C21,3.890 20.100,3 19,3M19,5V19H5V5H19Z"/></svg></div>
<div class="c k-en" style="left:1467px;width:63px"><svg class="cb" viewBox="0 0 24 24" width="25" height="25"><path fill="#1f1f1f" d="M19,19H5V5H15V3H5C3.890,3 3,3.890 3,5V19A2,2 0 0,0 5,21H19A2,2 0 0,0 21,19V11H19M7.910,10.080L6.500,11.500L11,16L21,6L19.590,4.580L11,13.170L7.910,10.080Z"/></svg></div>
<div class="c k-re" style="left:1530px;width:62px"><svg class="cb" viewBox="0 0 24 24" width="25" height="25"><path fill="#1f1f1f" d="M19,19H5V5H15V3H5C3.890,3 3,3.890 3,5V19A2,2 0 0,0 5,21H19A2,2 0 0,0 21,19V11H19M7.910,10.080L6.500,11.500L11,16L21,6L19.590,4.580L11,13.170L7.910,10.080Z"/></svg></div>
<div class="c k-complete" style="left:1592px;width:237px"><svg class="cb" viewBox="0 0 24 24" width="25" height="25"><path fill="#1f1f1f" d="M19,3H5C3.890,3 3,3.890 3,5V19A2,2 0 0,0 5,21H19A2,2 0 0,0 21,19V5C21,3.890 20.100,3 19,3M19,5V19H5V5H19Z"/></svg></div>
</div>
<div class="row" style="top:499px">
<div class="c k-sel" style="left:0px;width:23px"></div>
<div class="c k-job" style="left:23px;width:161px"><span>H2512064</span></div>
<div class="c k-part" style="left:184px;width:125px"><span>WN-1LB-CP<span class="dots">...</span></span></div>
<div class="c k-rev" style="left:309px;width:110px"><span>R001</span></div>
<div class="c k-gap" style="left:419px;width:17px"></div>
<div class="c k-qty" style="left:436px;width:118px"><span>37.04</span></div>
<div class="c k-req" style="left:554px;width:163px"><span>16/12/2025</span></div>
<div class="c k-start" style="left:717px;width:162px"><span>15/12/2025</span></div>
<div class="c k-due" style="left:879px;width:163px"><span>16/12/2025</span></div>
<div class="c k-planner" style="left:1042px;width:125px"></div>
<div class="c k-sched" style="left:1167px;width:87px"><span>NORMAL</span></div>
<div class="c k-type" style="left:1254px;width:88px"><span>Manuf<span class="dots">...</span></span></div>
<div class="c k-firm" style="left:1342px;width:62px"><svg class="cb" viewBox="0 0 24 24" width="25" height="25"><path fill="#1f1f1f" d="M19,19H5V5H15V3H5C3.890,3 3,3.890 3,5V19A2,2 0 0,0 5,21H19A2,2 0 0,0 21,19V11H19M7.910,10.080L6.500,11.500L11,16L21,6L19.590,4.580L11,13.170L7.910,10.080Z"/></svg></div>
<div class="c k-cl" style="left:1404px;width:63px"><svg class="cb" viewBox="0 0 24 24" width="25" height="25"><path fill="#1f1f1f" d="M19,3H5C3.890,3 3,3.890 3,5V19A2,2 0 0,0 5,21H19A2,2 0 0,0 21,19V5C21,3.890 20.100,3 19,3M19,5V19H5V5H19Z"/></svg></div>
<div class="c k-en" style="left:1467px;width:63px"><svg class="cb" viewBox="0 0 24 24" width="25" height="25"><path fill="#1f1f1f" d="M19,19H5V5H15V3H5C3.890,3 3,3.890 3,5V19A2,2 0 0,0 5,21H19A2,2 0 0,0 21,19V11H19M7.910,10.080L6.500,11.500L11,16L21,6L19.590,4.580L11,13.170L7.910,10.080Z"/></svg></div>
<div class="c k-re" style="left:1530px;width:62px"><svg class="cb" viewBox="0 0 24 24" width="25" height="25"><path fill="#1f1f1f" d="M19,19H5V5H15V3H5C3.890,3 3,3.890 3,5V19A2,2 0 0,0 5,21H19A2,2 0 0,0 21,19V11H19M7.910,10.080L6.500,11.500L11,16L21,6L19.590,4.580L11,13.170L7.910,10.080Z"/></svg></div>
<div class="c k-complete" style="left:1592px;width:237px"><svg class="cb" viewBox="0 0 24 24" width="25" height="25"><path fill="#1f1f1f" d="M19,3H5C3.890,3 3,3.890 3,5V19A2,2 0 0,0 5,21H19A2,2 0 0,0 21,19V5C21,3.890 20.100,3 19,3M19,5V19H5V5H19Z"/></svg></div>
</div>
<div class="row" style="top:529px">
<div class="c k-sel" style="left:0px;width:23px"></div>
<div class="c k-job" style="left:23px;width:161px"><span>H2512063</span></div>
<div class="c k-part" style="left:184px;width:125px"><span>WIP-CPSB01</span></div>
<div class="c k-rev" style="left:309px;width:110px"><span>R001</span></div>
<div class="c k-gap" style="left:419px;width:17px"></div>
<div class="c k-qty" style="left:436px;width:118px"><span>100.00</span></div>
<div class="c k-req" style="left:554px;width:163px"><span>15/12/2025</span></div>
<div class="c k-start" style="left:717px;width:162px"><span>15/12/2025</span></div>
<div class="c k-due" style="left:879px;width:163px"><span>15/12/2025</span></div>
<div class="c k-planner" style="left:1042px;width:125px"></div>
<div class="c k-sched" style="left:1167px;width:87px"><span>NORMAL</span></div>
<div class="c k-type" style="left:1254px;width:88px"><span>Manuf<span class="dots">...</span></span></div>
<div class="c k-firm" style="left:1342px;width:62px"><svg class="cb" viewBox="0 0 24 24" width="25" height="25"><path fill="#1f1f1f" d="M19,19H5V5H15V3H5C3.890,3 3,3.890 3,5V19A2,2 0 0,0 5,21H19A2,2 0 0,0 21,19V11H19M7.910,10.080L6.500,11.500L11,16L21,6L19.590,4.580L11,13.170L7.910,10.080Z"/></svg></div>
<div class="c k-cl" style="left:1404px;width:63px"><svg class="cb" viewBox="0 0 24 24" width="25" height="25"><path fill="#1f1f1f" d="M19,3H5C3.890,3 3,3.890 3,5V19A2,2 0 0,0 5,21H19A2,2 0 0,0 21,19V5C21,3.890 20.100,3 19,3M19,5V19H5V5H19Z"/></svg></div>
<div class="c k-en" style="left:1467px;width:63px"><svg class="cb" viewBox="0 0 24 24" width="25" height="25"><path fill="#1f1f1f" d="M19,19H5V5H15V3H5C3.890,3 3,3.890 3,5V19A2,2 0 0,0 5,21H19A2,2 0 0,0 21,19V11H19M7.910,10.080L6.500,11.500L11,16L21,6L19.590,4.580L11,13.170L7.910,10.080Z"/></svg></div>
<div class="c k-re" style="left:1530px;width:62px"><svg class="cb" viewBox="0 0 24 24" width="25" height="25"><path fill="#1f1f1f" d="M19,19H5V5H15V3H5C3.890,3 3,3.890 3,5V19A2,2 0 0,0 5,21H19A2,2 0 0,0 21,19V11H19M7.910,10.080L6.500,11.500L11,16L21,6L19.590,4.580L11,13.170L7.910,10.080Z"/></svg></div>
<div class="c k-complete" style="left:1592px;width:237px"><svg class="cb" viewBox="0 0 24 24" width="25" height="25"><path fill="#1f1f1f" d="M19,3H5C3.890,3 3,3.890 3,5V19A2,2 0 0,0 5,21H19A2,2 0 0,0 21,19V5C21,3.890 20.100,3 19,3M19,5V19H5V5H19Z"/></svg></div>
</div>
<div class="row" style="top:559px">
<div class="c k-sel" style="left:0px;width:23px"></div>
<div class="c k-job" style="left:23px;width:161px"><span>H2512062</span></div>
<div class="c k-part" style="left:184px;width:125px"><span>WN-1KG-CP<span class="dots">...</span></span></div>
<div class="c k-rev" style="left:309px;width:110px"><span>R001</span></div>
<div class="c k-gap" style="left:419px;width:17px"></div>
<div class="c k-qty" style="left:436px;width:118px"><span>4.17</span></div>
<div class="c k-req" style="left:554px;width:163px"><span>16/12/2025</span></div>
<div class="c k-start" style="left:717px;width:162px"><span>15/12/2025</span></div>
<div class="c k-due" style="left:879px;width:163px"><span>16/12/2025</span></div>
<div class="c k-planner" style="left:1042px;width:125px"></div>
<div class="c k-sched" style="left:1167px;width:87px"><span>NORMAL</span></div>
<div class="c k-type" style="left:1254px;width:88px"><span>Manuf<span class="dots">...</span></span></div>
<div class="c k-firm" style="left:1342px;width:62px"><svg class="cb" viewBox="0 0 24 24" width="25" height="25"><path fill="#1f1f1f" d="M19,19H5V5H15V3H5C3.890,3 3,3.890 3,5V19A2,2 0 0,0 5,21H19A2,2 0 0,0 21,19V11H19M7.910,10.080L6.500,11.500L11,16L21,6L19.590,4.580L11,13.170L7.910,10.080Z"/></svg></div>
<div class="c k-cl" style="left:1404px;width:63px"><svg class="cb" viewBox="0 0 24 24" width="25" height="25"><path fill="#1f1f1f" d="M19,3H5C3.890,3 3,3.890 3,5V19A2,2 0 0,0 5,21H19A2,2 0 0,0 21,19V5C21,3.890 20.100,3 19,3M19,5V19H5V5H19Z"/></svg></div>
<div class="c k-en" style="left:1467px;width:63px"><svg class="cb" viewBox="0 0 24 24" width="25" height="25"><path fill="#1f1f1f" d="M19,19H5V5H15V3H5C3.890,3 3,3.890 3,5V19A2,2 0 0,0 5,21H19A2,2 0 0,0 21,19V11H19M7.910,10.080L6.500,11.500L11,16L21,6L19.590,4.580L11,13.170L7.910,10.080Z"/></svg></div>
<div class="c k-re" style="left:1530px;width:62px"><svg class="cb" viewBox="0 0 24 24" width="25" height="25"><path fill="#1f1f1f" d="M19,19H5V5H15V3H5C3.890,3 3,3.890 3,5V19A2,2 0 0,0 5,21H19A2,2 0 0,0 21,19V11H19M7.910,10.080L6.500,11.500L11,16L21,6L19.590,4.580L11,13.170L7.910,10.080Z"/></svg></div>
<div class="c k-complete" style="left:1592px;width:237px"><svg class="cb" viewBox="0 0 24 24" width="25" height="25"><path fill="#1f1f1f" d="M19,3H5C3.890,3 3,3.890 3,5V19A2,2 0 0,0 5,21H19A2,2 0 0,0 21,19V5C21,3.890 20.100,3 19,3M19,5V19H5V5H19Z"/></svg></div>
</div>
<div class="sbar"></div>
</div>
</body></html>
